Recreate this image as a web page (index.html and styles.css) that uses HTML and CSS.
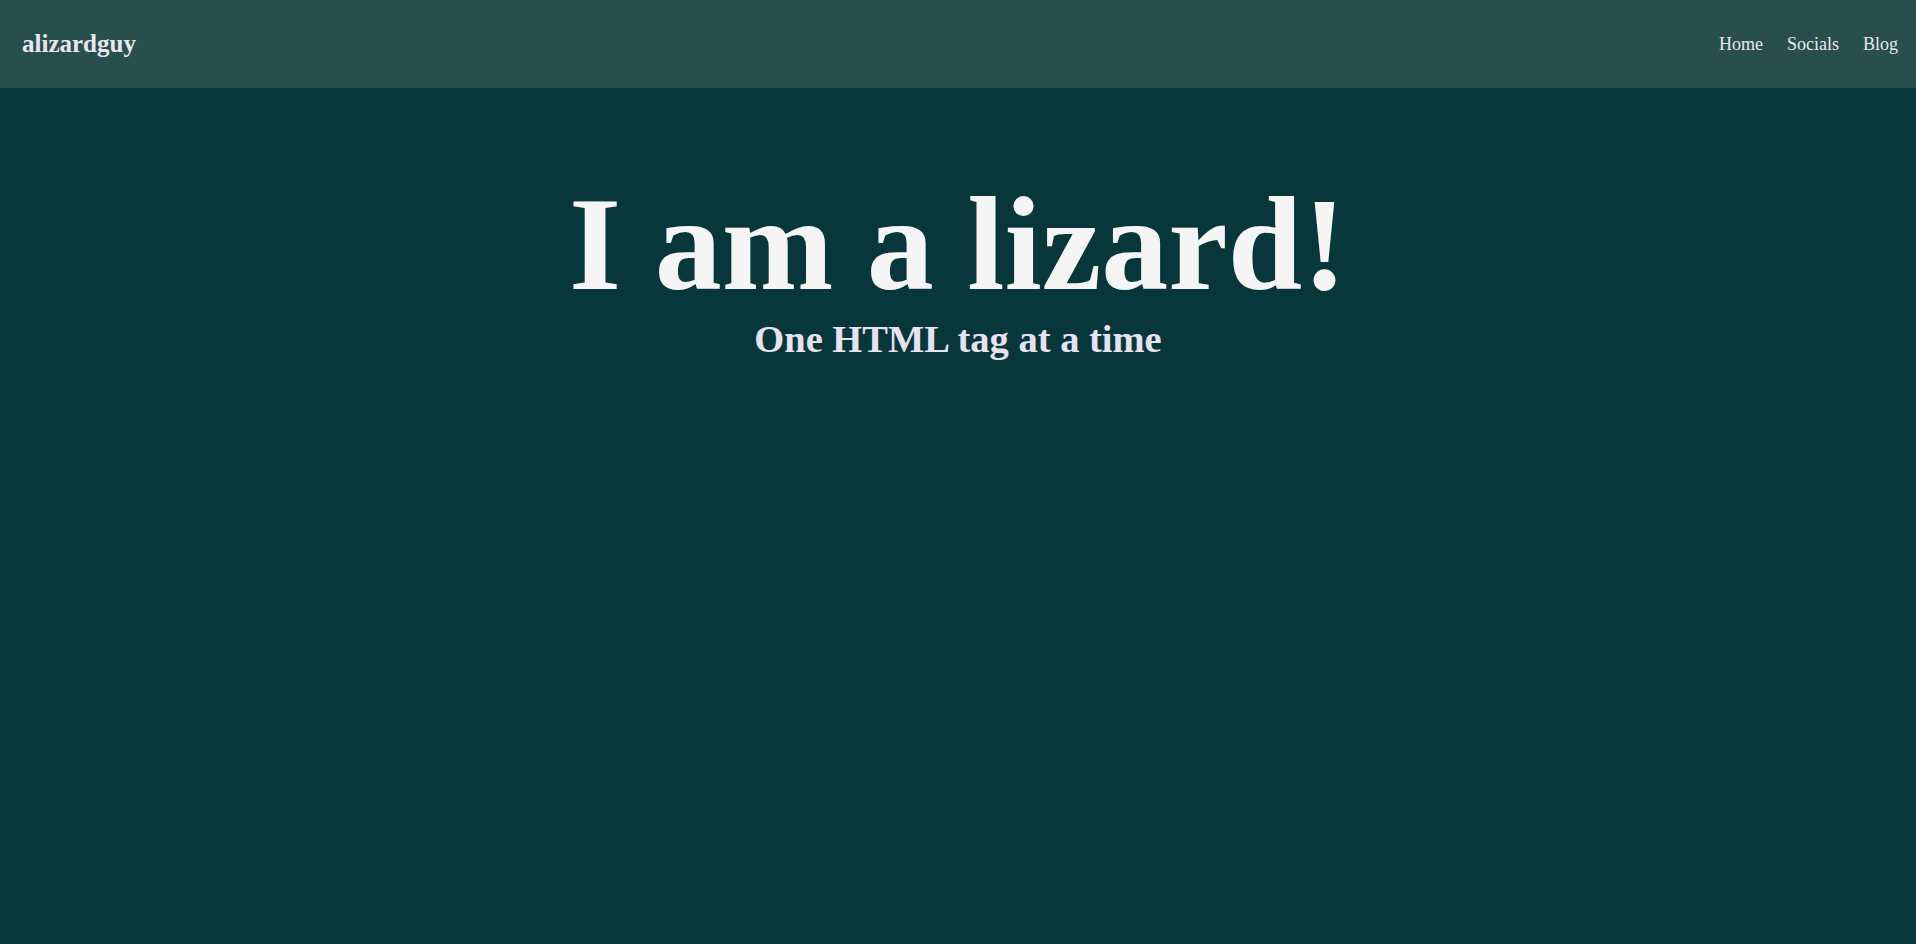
FILE: index.html
```html
<!DOCTYPE html>
<html lang="en">
<head>
<meta charset="utf-8">
<title>alizardguy</title>
<link rel="stylesheet" href="styles.css">
</head>
<body>
<header class="topbar">
  <a class="brand" href="#">alizardguy</a>
  <nav class="nav">
    <a href="#">Home</a>
    <a href="#">Socials</a>
    <a href="#">Blog</a>
  </nav>
</header>
<main class="hero">
  <h1 class="hero-title">I am a lizard!</h1>
  <h2 class="hero-sub">One HTML tag at a time</h2>
</main>
</body>
</html>
```
FILE: styles.css
```css
html, body {
  margin: 0;
  padding: 0;
  height: 100%;
}
body {
  background: #08373b;
  font-family: "Liberation Serif", "Times New Roman", serif;
  color: #f5f5f5;
}
.topbar {
  height: 88px;
  background: #294f4c;
  display: flex;
  align-items: center;
  justify-content: space-between;
  padding: 0 18px 0 22px;
  box-sizing: border-box;
}
.brand {
  font-size: 25px;
  font-weight: bold;
  color: #e9e6f2;
  text-decoration: none;
}
.nav {
  display: flex;
  gap: 24px;
}
.nav a {
  font-size: 18px;
  color: #e9e6f2;
  text-decoration: none;
}
.hero {
  padding-top: 79px;
  text-align: center;
}
.hero-title {
  margin: 0;
  font-size: 134px;
  font-weight: bold;
  color: #f5f5f5;
}
.hero-sub {
  margin: -4px 0 0;
  font-size: 38.5px;
  font-weight: bold;
  color: #e6e2f0;
}
```
